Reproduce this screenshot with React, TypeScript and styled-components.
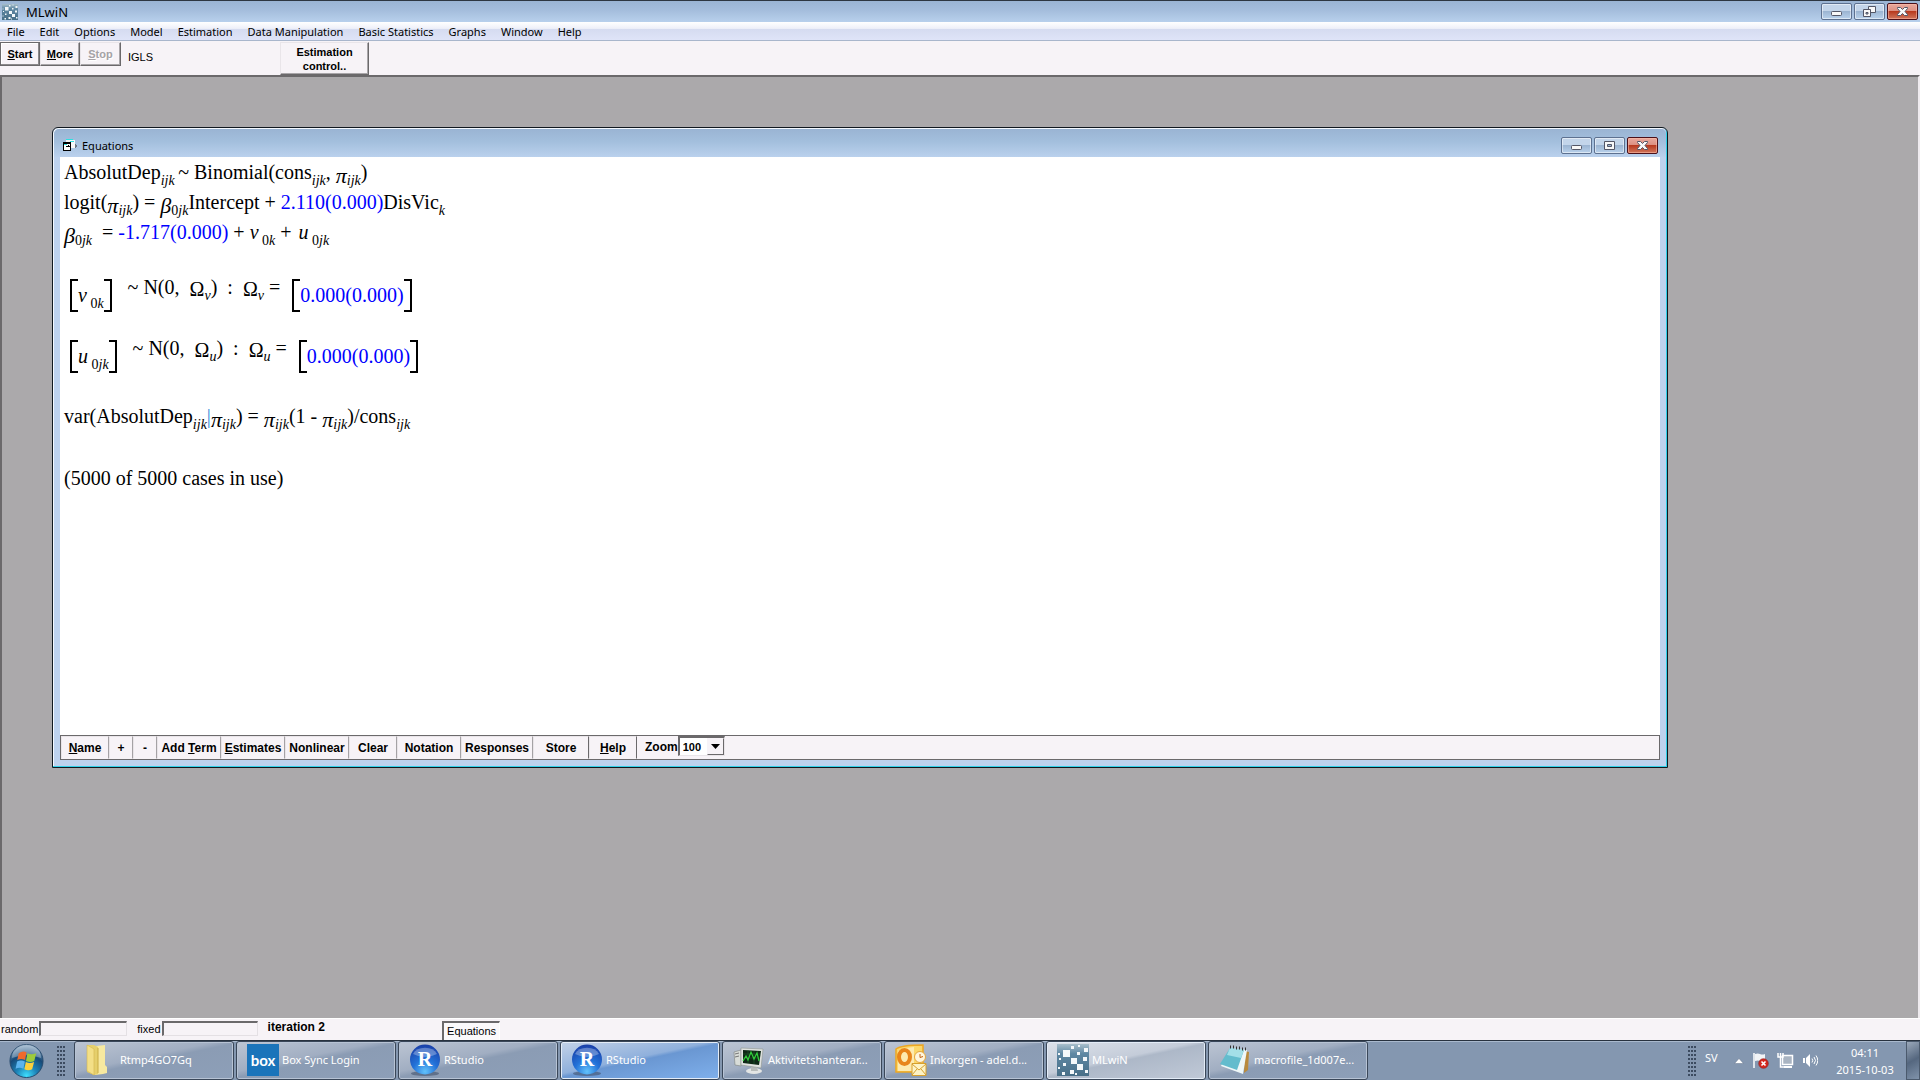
import React from "react";
import styled, { createGlobalStyle, css } from "styled-components";

const UI = `"Noto Sans", "Open Sans", sans-serif`;
const SANS = `"Liberation Sans", Arial, sans-serif`;
const SERIF = `"Liberation Serif", "Times New Roman", serif`;

const Global = createGlobalStyle`
  *, *::before, *::after { box-sizing: border-box; }
  body { margin: 0; background: #aba9ab; font-family: ${UI}; font-size: 11px; color: #000; }
  button, input, select { font: inherit; color: inherit; margin: 0; border-radius: 0; }
`;

const Screen = styled.div`
  display: flex;
  flex-direction: column;
  height: 100vh;
  overflow: hidden;
`;

/* ---------- title bars ---------- */
const AppTitle = styled.header`
  display: flex;
  flex: none;
  align-items: center;
  gap: 8px;
  height: 22px;
  padding: 0 2px;
  border-top: 1px solid #2d3640;
  background: linear-gradient(#9ab4d3, #a3bcdb 40%, #b8d0ec);
  font-size: 13px;
  line-height: 16px;
`;

const TitleText = styled.span`
  flex: 1;
`;

const Controls = styled.div`
  display: flex;
  gap: 2px;
`;

const Control = styled.button<{ $close?: boolean }>`
  display: flex;
  align-items: center;
  justify-content: center;
  width: 31px;
  height: 17px;
  padding: 0;
  border: 1px solid #5d7190;
  border-radius: 2px;
  box-shadow: inset 0 0 0 1px rgba(255, 255, 255, 0.5);
  background: linear-gradient(#c3d5ea 0 48%, #9cb5d2 50%, #b9d2ec);
  ${(p) =>
    p.$close &&
    css`
      border-color: #4b1019;
      box-shadow: inset 0 0 0 1px rgba(255, 190, 170, 0.55);
      background: linear-gradient(#e8a99e, #dc8f80 48%, #b83a1f 50%, #d0765c);
    `}
`;

/* ---------- menu and toolbar ---------- */
const MenuBar = styled.nav`
  display: flex;
  flex: none;
  gap: 1px;
  height: 19px;
  border-bottom: 1px solid #a9b6cc;
  background: linear-gradient(#ffffff, #eef0f9 36%, #d5dbf0 38%, #dfe4f8);
`;

const MenuItem = styled.button`
  padding: 1px 7px 0;
  border: 0;
  background: none;
  line-height: 17px;
`;

const Toolbar = styled.div`
  display: flex;
  flex: none;
  align-items: flex-start;
  height: 34px;
  padding-top: 1px;
  background: #f7f3f7;
  font-family: ${SANS};
`;

const ToolButton = styled.button<{ $w: number; $tall?: boolean; $default?: boolean }>`
  width: ${(p) => p.$w}px;
  height: ${(p) => (p.$tall ? 33 : 24)}px;
  padding: 0;
  border: 1px solid;
  border-color: #e9e5e9 #6b696b #6b696b #e9e5e9;
  box-shadow: inset -1px -1px #a9a6a9;
  background: #f7f3f7;
  font-weight: 700;
  line-height: 14px;
  ${(p) => p.$default && css`border-color: #6b696b; box-shadow: inset -1px -1px #8b898b, inset 1px 1px #fff;`}
  &:disabled { color: #a5a2a5; text-shadow: 1px 1px #fff; }
`;

const Method = styled.span`
  width: 159px;
  padding: 9px 0 0 7px;
  line-height: 13px;
`;

const Workspace = styled.main`
  flex: 1;
  min-height: 0;
  padding: 50px 250px 0 50px;
  border: solid #6b696b;
  border-width: 2px 0 0 2px;
  border-right: 2px solid #efebef;
  background: #aba9ab;
`;

/* ---------- equations window ---------- */
const Window = styled.section`
  display: flex;
  flex-direction: column;
  height: 641px;
  border: 1px solid #10181f;
  border-radius: 6px 6px 0 0;
  box-shadow: inset -1px -1px #2fd0e8, inset 1px 1px #f4f9ff;
  background: #bdd2ee;
  padding: 1px 7px 7px;
`;

const WindowTitle = styled.header`
  display: flex;
  flex: none;
  align-items: center;
  gap: 4px;
  height: 28px;
  margin: 0 -6px;
  padding: 4px 8px 0;
  border-radius: 5px 5px 0 0;
  background: linear-gradient(#9ab4d3, #a3bfdd 45%, #bad1ed);
`;

const Sheet = styled.div`
  flex: 1;
  min-height: 0;
  padding: 0 4px;
  background: #fff;
  font-family: ${SERIF};
  font-size: 20px;
  white-space: pre;
`;

const Line = styled.div<{ $before?: number }>`
  height: 30px;
  margin-top: ${(p) => p.$before ?? 0}px;
  line-height: 30px;
`;

const MatrixLine = styled.div<{ $before: number }>`
  display: flex;
  align-items: flex-start;
  height: 33px;
  margin-top: ${(p) => p.$before}px;
  padding-left: 6px;
  line-height: 16px;
`;

const Matrix = styled.span`
  display: flex;
  height: 33px;
  line-height: 32px;
  &::before, &::after {
    content: "";
    width: 8px;
    border: 2px solid #000;
  }
  &::before { border-right: 0; }
  &::after { border-left: 0; }
`;

const Relation = styled.span`
  margin: 0 12px 0 16px;
`;

const Sub = styled.sub`
  font-size: 14px;
  font-style: italic;
  line-height: 0;
  vertical-align: -6px;
`;

const Num = styled.span`
  font-style: normal;
`;

const Greek = styled.i`
  font-size: 22px;
  line-height: 0;
  vertical-align: -4px;
`;

const Omega = styled.span`
  line-height: 0;
  vertical-align: -2px;
`;

const Effect = styled.i`
  padding-left: 2px;
`;

const Est = styled.span`
  color: #0000ff;
`;

const Bar = styled.span`
  color: #2f86d8;
`;

const ActionBar = styled.div`
  display: flex;
  flex: none;
  height: 25px;
  border: 1px solid #6b696b;
  background: #f7f3f7;
  font-family: ${SANS};
  font-size: 12px;
  font-weight: 700;
`;

const Action = styled.button<{ $w: number; $edge?: boolean }>`
  width: ${(p) => p.$w}px;
  padding: 0;
  border: 1px solid;
  border-color: #e9e5e9 ${(p) => (p.$edge ? "#6b696b" : "#a5a2a5")} #f7f3f7 #e9e5e9;
  background: #f7f3f7;
  white-space: nowrap;
`;

const ZoomLabel = styled.label`
  padding-left: 8px;
  line-height: 22px;
`;

const ZoomBox = styled.span`
  display: grid;
  grid-template-columns: 1fr 17px;
  width: 47px;
  height: 20px;
  border: solid;
  border-width: 2px 1px 1px 2px;
  border-color: #6b696b #e9e5e9 #e9e5e9 #6b696b;
  background: #fff;
  font-size: 11px;
`;

const ZoomSelect = styled.select`
  grid-area: 1 / 1 / 2 / 3;
  padding: 0 0 0 3px;
  border: 0;
  outline: 0;
  appearance: none;
  background: none;
`;

const ZoomArrow = styled.span`
  display: flex;
  grid-area: 1 / 2 / 2 / 3;
  align-items: center;
  justify-content: center;
  border: 1px solid;
  border-color: #f7f3f7 #6b696b #6b696b #f7f3f7;
  background: #f7f3f7;
  pointer-events: none;
`;

/* ---------- status bar ---------- */
const StatusBar = styled.footer`
  display: flex;
  flex: none;
  align-items: flex-start;
  height: 22px;
  padding: 2px 1px 0;
  border-top: 1px solid #fff;
  background: #f7f3f7;
  font-family: ${SANS};
`;

const Progress = styled.label<{ $w: number }>`
  display: flex;
  gap: 1px;
  margin-right: 10px;
  line-height: 16px;
  input {
    width: ${(p) => p.$w}px;
    height: 15px;
    padding: 0;
    border: solid;
    border-width: 2px 1px 1px 2px;
    border-color: #6b696b #e4e0e4 #e4e0e4 #6b696b;
    background: #f7f3f7;
    outline: 0;
  }
`;

const Iteration = styled.strong`
  width: 174px;
  font-size: 12px;
  line-height: 13px;
`;

const Pane = styled.button`
  align-self: flex-end;
  width: 58px;
  height: 19px;
  padding: 0 0 1px 1px;
  border: solid;
  border-width: 2px 1px 0 2px;
  border-color: #6b696b #fff #fff #6b696b;
  background: #fbf9fb;
`;

/* ---------- taskbar ---------- */
const Taskbar = styled.footer`
  display: flex;
  flex: none;
  align-items: center;
  height: 40px;
  border-top: 1px solid #28323f;
  box-shadow: inset 0 1px #a9b9cd;
  background: #8497b0;
  color: #fff;
`;

const StartButton = styled.button`
  display: flex;
  width: 53px;
  padding: 0 9px;
  border: 0;
  background: none;
`;

const Grip = styled.span`
  width: 9px;
  height: 30px;
  margin: 0 8px 0 4px;
  background: radial-gradient(circle at 1px 1px, #3c4b60 1px, transparent 1px) 0 0 / 3px 4px;
`;

const Tasks = styled.div`
  display: flex;
  flex: 1;
  gap: 2px;
`;

const Task = styled.button<{ $tone?: "blue" | "light" }>`
  display: flex;
  align-items: center;
  gap: 3px;
  width: 160px;
  height: 39px;
  padding: 0 0 1px 10px;
  border: 1px solid #3a4759;
  border-radius: 3px;
  box-shadow: inset 0 0 0 1px ${(p) => (p.$tone ? "#e3ecf7" : "#b7c3d4")};
  background: ${(p) =>
    p.$tone === "blue"
      ? "linear-gradient(168deg, #c3d2e8 0, #8fb0dc 45%, #6a97d2 50%, #7fb0ec)"
      : p.$tone === "light"
      ? "linear-gradient(168deg, #dde2ea 0, #c4ccd9 45%, #adb8c8 50%, #c0c9d7)"
      : "linear-gradient(168deg, #bcc5d3 0, #a1aec2 42%, #8b9cb4 50%, #8d9fb8)"};
  white-space: nowrap;
`;

const TaskLabel = styled.span`
  padding-bottom: 2px;
`;

const Tray = styled.div`
  display: flex;
  align-items: center;
  height: 39px;
`;

const Lang = styled.span`
  width: 29px;
  padding-bottom: 6px;
`;

const TrayIcons = styled.div`
  display: flex;
  align-items: center;
  gap: 8px;
`;

const Clock = styled.time`
  width: 88px;
  padding-left: 6px;
  line-height: 17px;
  text-align: center;
`;

const ShowDesktop = styled.button`
  width: 14px;
  height: 39px;
  padding: 0;
  border: 1px solid #4b5a6d;
  background: linear-gradient(150deg, #9aa8ba, #55677f 50%, #8093ab);
`;

/* ---------- drawings ---------- */
const squares = [
  [1, 9, 2], [6, 6, 7], [14, 2, 3], [21, 1, 2], [20, 8, 3], [27, 4, 4], [14, 14, 6], [26, 13, 4],
  [2, 14, 2], [6, 19, 3], [20, 20, 6], [13, 26, 4], [5, 28, 3], [28, 26, 3], [1, 23, 2], [18, 29, 2],
];

const Mosaic = ({ size }: { size: number }) => (
  <svg width={size} height={size} viewBox="0 0 32 32" aria-hidden="true">
    <defs>
      <linearGradient id="mosaic" x1="0" y1="0" x2="0" y2="1">
        <stop offset="0" stopColor="#a9bfcc" />
        <stop offset=".3" stopColor="#5f88a3" />
        <stop offset="1" stopColor="#486f88" />
      </linearGradient>
    </defs>
    <rect width="32" height="32" fill="url(#mosaic)" />
    {squares.map(([x, y, s]) => (
      <rect key={`${x}-${y}`} x={x} y={y} width={s} height={s} fill="#f4f8fa" />
    ))}
  </svg>
);

const MinGlyph = () => (
  <svg width="13" height="11" viewBox="0 0 13 11" aria-hidden="true">
    <rect x="1.5" y="5.5" width="10" height="4" rx="1" fill="#f8f8f8" stroke="#535666" />
  </svg>
);
const MaxGlyph = () => (
  <svg width="13" height="11" viewBox="0 0 13 11" aria-hidden="true">
    <path d="M1.5 1.5h10v8h-10zM4.500 4.500h4v2h-4z" fill="#f8f8f8" fillRule="evenodd" stroke="#535666" />
  </svg>
);
const RestoreGlyph = () => (
  <svg width="13" height="12" viewBox="0 0 13 12" aria-hidden="true">
    <path d="M5.500.5h7v6h-7z" fill="#f8f8f8" stroke="#535666" />
    <path d="M.5 3.500h7v7h-7zM3 6.500h2v1.500h-2z" fill="#f8f8f8" fillRule="evenodd" stroke="#535666" />
  </svg>
);
const CloseGlyph = () => (
  <svg width="13" height="11" viewBox="0 0 13 11" aria-hidden="true">
    <path d="M1.500 1.500h3l2 2 2-2h3v1l-2.500 3 2.500 3v1h-3l-2-2-2 2h-3v-1l2.500-3-2.500-3z" fill="#f8f8f8" stroke="#535666" />
  </svg>
);

const FormIcon = () => (
  <svg width="16" height="16" viewBox="0 0 16 16" shapeRendering="crispEdges" aria-hidden="true">
    <path d="M4 3h9v8H4z" fill="#f7f7f7" />
    <path d="M4 2.500h7M8 4.500h4" stroke="#2fe0e0" />
    <path d="M13 7h1v1h1v2h-1v1h-1z" fill="#6c7684" />
    <path d="M1.500 5.500h7v8h-7z" fill="#fff" stroke="#000" />
    <path d="M1 6.500h8" stroke="#000" />
    <path d="M2 7.500h3" stroke="#2fe0e0" />
    <path d="M4 9.500h2v-2M6 9.500h2" stroke="#000" fill="none" />
  </svg>
);

const Orb = () => (
  <svg width="36" height="36" viewBox="0 0 36 36" aria-hidden="true">
    <defs>
      <radialGradient id="orb" cx=".5" cy=".95" r=".9">
        <stop offset="0" stopColor="#3fe0ff" />
        <stop offset=".35" stopColor="#1d84b8" />
        <stop offset=".7" stopColor="#174a78" />
        <stop offset="1" stopColor="#7f9fbc" />
      </radialGradient>
    </defs>
    <circle cx="18" cy="18" r="17" fill="url(#orb)" stroke="#24486b" />
    <path d="M3 15a15 14 0 0 1 30 0q-15-6-30 0z" fill="#fff" opacity=".3" />
    <path d="M10 10q4-3 8-1l-1.500 8q-4-2-8 0z" fill="#ee6a2c" />
    <path d="M19 10q4 2 9 0l-2 8q-4 2-8.500 0z" fill="#9ccb3b" />
    <path d="M8.300 18.500q4-2 8 0l-1.500 7.500q-4-2-8 0z" fill="#5bb3ee" />
    <path d="M17.300 19q4 2 8.500 0l-2 7.500q-4 2-8 0z" fill="#fcd03c" />
  </svg>
);

const FolderIcon = () => (
  <svg width="32" height="32" viewBox="0 0 32 32" aria-hidden="true">
    <path d="M11 2l9-1v20l2 2v6l-4 1-8 1z" fill="#f7e9a0" />
    <path d="M2 1l7 0 4 2v27l-4 1-7-3z" fill="#e5cf6c" />
    <path d="M2 1l7 4v26l-7-4z" fill="#f3df87" stroke="#d3b74f" strokeWidth=".6" />
    <path d="M13 4v25" stroke="#c9ac45" />
  </svg>
);

const BoxText = styled.text`
  font: 700 15px Lato, sans-serif;
`;

const BoxIcon = () => (
  <svg width="32" height="32" viewBox="0 0 32 32" aria-hidden="true">
    <rect width="32" height="32" fill="#1a74ba" />
    <BoxText x="16" y="22" textAnchor="middle" fill="#fff">box</BoxText>
  </svg>
);

const RText = styled.text`
  font: 700 20px ${SERIF};
`;

const RIcon = () => (
  <svg width="32" height="32" viewBox="0 0 32 32" aria-hidden="true">
    <defs>
      <radialGradient id="rball" cx=".5" cy=".9" r=".9">
        <stop offset="0" stopColor="#62c2fb" />
        <stop offset=".45" stopColor="#2372d8" />
        <stop offset="1" stopColor="#1a3fa8" />
      </radialGradient>
    </defs>
    <ellipse cx="16" cy="29.500" rx="14" ry="2.500" fill="#43546e" opacity=".6" />
    <circle cx="16" cy="15.500" r="15" fill="url(#rball)" />
    <path d="M4 10a13 10 0 0 1 24 0q-12 6-24 0z" fill="#fff" opacity=".3" />
    <RText x="16" y="22" textAnchor="middle" fill="#fff">R</RText>
  </svg>
);

const MonitorIcon = () => (
  <svg width="32" height="32" viewBox="0 0 32 32" aria-hidden="true">
    <path d="M1 8l7-2v16l-6-1z" fill="#d8dcd8" stroke="#7c827e" strokeWidth=".6" />
    <path d="M2 10l4-1M2 13l4-1" stroke="#777" />
    <ellipse cx="21" cy="27" rx="8" ry="3" fill="#e3e5e4" />
    <path d="M18 22l6 1 1 4h-7z" fill="#b7bbb9" />
    <path d="M8 4l22 1-2 19-20-3z" fill="#dfe2df" stroke="#8e9590" strokeWidth=".6" />
    <path d="M10 6l18 1-2 14-16-2z" fill="#0e2815" />
    <path d="M10 10h17M10 14h17M15 6v13M21 7v13" stroke="#22602c" strokeWidth=".6" />
    <path d="M10 17l3-5 2 4 3-8 3 7 3-6 2 8" fill="none" stroke="#31d13b" strokeWidth="1.200" />
  </svg>
);

const OutlookIcon = () => (
  <svg width="32" height="32" viewBox="0 0 32 32" aria-hidden="true">
    <path d="M1 5q5-4 27-4v27H1z" fill="#fbd76a" stroke="#eda722" strokeWidth="1.500" />
    <path d="M3 7q4-3 16-4v24H3z" fill="#fdeab0" />
    <ellipse cx="9.500" cy="13" rx="5.500" ry="7" fill="none" stroke="#e8851b" strokeWidth="4" />
    <circle cx="25" cy="13" r="5.500" fill="#fff6dc" stroke="#e3a63d" />
    <path d="M25 10v3.500l3-1" fill="none" stroke="#c35f12" />
    <path d="M17 19.500h14v12H17z" fill="#fdf3c6" stroke="#d6a02e" />
    <path d="M17 20l7 6 7-6M17 31l5-6M31 31l-5-6" fill="none" stroke="#d6a02e" />
  </svg>
);

const NotepadIcon = () => (
  <svg width="32" height="32" viewBox="0 0 32 32" aria-hidden="true">
    <path d="M26 7l4 1-1 18-4 3z" fill="#b98a3c" />
    <path d="M11 4l17 2-4 24-22-8z" fill="#eef7f8" />
    <path d="M11 4l14 2-7 20-17-6z" fill="#63bccd" />
    <path d="M11 4l14 2-3 8-14-3z" fill="#a3dfe8" />
    <path d="M11 3h1M14 3h1M17 4h1M20 4h1M23 5h1M26 5h1" stroke="#333" strokeWidth="3" />
  </svg>
);

const UpIcon = () => (
  <svg width="10" height="6" viewBox="0 0 10 6" aria-hidden="true">
    <path d="M5 .5L9.500 5.500H.5z" fill="#fff" stroke="#65758c" strokeWidth=".5" />
  </svg>
);
const FlagIcon = () => (
  <svg width="17" height="17" viewBox="0 0 17 17" aria-hidden="true">
    <path d="M2 1v15" stroke="#fff" strokeWidth="1.500" />
    <path d="M3 2q3-1 5 0t5 0v7q-3 1-5 0t-5 0z" fill="#f2f4f6" />
    <circle cx="11.500" cy="11.500" r="4.800" fill="#d4281e" stroke="#8b1c1c" strokeWidth=".6" />
    <path d="M9.500 9.500l4 4M13.500 9.500l-4 4" stroke="#fff" strokeWidth="1.600" />
  </svg>
);
const NetworkIcon = () => (
  <svg width="17" height="17" viewBox="0 0 17 17" aria-hidden="true">
    <rect x="5.500" y="3.500" width="10" height="9" fill="#a9b4c2" stroke="#fff" strokeWidth="1.500" />
    <path d="M7 15h8" stroke="#fff" strokeWidth="2" />
    <path d="M1 1v4h5V1M3.500 1v4M3.500 5v10h4" fill="none" stroke="#fff" strokeWidth="1.500" />
  </svg>
);
const SpeakerIcon = () => (
  <svg width="16" height="15" viewBox="0 0 16 15" aria-hidden="true">
    <path d="M1 5h2v5H1z" fill="#fff" />
    <path d="M4 5l4-4v13l-4-4z" fill="#fff" />
    <path d="M10 5.500q1.500 2 0 4M12 4q3 3.500 0 7M14 2.500q3.500 5 0 10" fill="none" stroke="#fff" />
  </svg>
);

/* ---------- formula parts ---------- */
const IJK = () => <Sub>ijk</Sub>;
const Pi = () => (
  <>
    <Greek>π</Greek>
    <IJK />
  </>
);
const Beta = () => (
  <>
    <Greek>β</Greek>
    <Sub><Num>0</Num>jk</Sub>
  </>
);

const Distribution = ({ level, index, value }: { level: string; index: string; value: string }) => (
  <>
    <Matrix>
      <span>
        <i>{level}</i><Sub>{" "}<Num>0</Num>{index}</Sub>
      </span>
    </Matrix>
    <Relation>
      ~ N(0,{"  "}<Omega>Ω</Omega><Sub>{level}</Sub>){"  "}:{"  "}<Omega>Ω</Omega><Sub>{level}</Sub> =
    </Relation>
    <Matrix>
      <Est>{value}</Est>
    </Matrix>
  </>
);

const menus = ["File", "Edit", "Options", "Model", "Estimation", "Data Manipulation", "Basic Statistics", "Graphs", "Window", "Help"];

const actions: { w: number; label: React.ReactNode; edge?: boolean }[] = [
  { w: 48, label: <><u>N</u>ame</> },
  { w: 24, label: "+" },
  { w: 24, label: "-" },
  { w: 64, label: <>Add <u>T</u>erm</> },
  { w: 64, label: <><u>E</u>stimates</> },
  { w: 64, label: "Nonlinear" },
  { w: 48, label: "Clear" },
  { w: 64, label: "Notation" },
  { w: 72, label: "Responses" },
  { w: 56, label: "Store", edge: true },
  { w: 48, label: <><u>H</u>elp</>, edge: true },
];

const tasks: { icon: React.ReactNode; label: string; tone?: "blue" | "light" }[] = [
  { icon: <FolderIcon />, label: "Rtmp4GO7Gq" },
  { icon: <BoxIcon />, label: "Box Sync Login" },
  { icon: <RIcon />, label: "RStudio" },
  { icon: <RIcon />, label: "RStudio", tone: "blue" },
  { icon: <MonitorIcon />, label: "Aktivitetshanterar..." },
  { icon: <OutlookIcon />, label: "Inkorgen - adel.d..." },
  { icon: <Mosaic size={32} />, label: "MLwiN", tone: "light" },
  { icon: <NotepadIcon />, label: "macrofile_1d007e..." },
];

export default function App() {
  return (
    <Screen>
      <Global />
      <AppTitle>
        <Mosaic size={16} />
        <TitleText>MLwiN</TitleText>
        <Controls>
          <Control aria-label="Minimize"><MinGlyph /></Control>
          <Control aria-label="Restore"><RestoreGlyph /></Control>
          <Control $close aria-label="Close"><CloseGlyph /></Control>
        </Controls>
      </AppTitle>
      <MenuBar>
        {menus.map((m) => <MenuItem key={m}>{m}</MenuItem>)}
      </MenuBar>
      <Toolbar>
        <ToolButton $w={40} $default><u>S</u>tart</ToolButton>
        <ToolButton $w={40}><u>M</u>ore</ToolButton>
        <ToolButton $w={41} disabled><u>S</u>top</ToolButton>
        <Method>IGLS</Method>
        <ToolButton $w={89} $tall>Estimation<br />control..</ToolButton>
      </Toolbar>
      <Workspace>
        <Window>
          <WindowTitle>
            <FormIcon />
            <TitleText>Equations</TitleText>
            <Controls>
              <Control aria-label="Minimize equations"><MinGlyph /></Control>
              <Control aria-label="Maximize equations"><MaxGlyph /></Control>
              <Control $close aria-label="Close equations"><CloseGlyph /></Control>
            </Controls>
          </WindowTitle>
          <Sheet>
            <Line>AbsolutDep<Sub>ijk </Sub>~ Binomial(cons<IJK />, <Pi />)</Line>
            <Line>logit(<Pi />) = <Beta />Intercept + <Est>2.110(0.000)</Est>DisVic<Sub>k</Sub></Line>
            <Line><Beta />{"  "}= <Est>-1.717(0.000)</Est> + <i>v</i><Sub> <Num>0</Num>k</Sub> + <Effect>u</Effect><Sub> <Num>0</Num>jk</Sub></Line>
            <MatrixLine $before={32}><Distribution level="v" index="k" value="0.000(0.000)" /></MatrixLine>
            <MatrixLine $before={28}><Distribution level="u" index="jk" value="0.000(0.000)" /></MatrixLine>
            <Line $before={28}>var(AbsolutDep<IJK /><Bar>|</Bar><Pi />) = <Pi />(1 - <Pi />)/cons<IJK /></Line>
            <Line $before={32}>(5000 of 5000 cases in use)</Line>
          </Sheet>
          <ActionBar>
            {actions.map((a, i) => <Action key={i} $w={a.w} $edge={a.edge}>{a.label}</Action>)}
            <ZoomLabel htmlFor="zoom">Zoom</ZoomLabel>
            <ZoomBox>
              <ZoomSelect id="zoom" defaultValue="100"><option>100</option></ZoomSelect>
              <ZoomArrow>
                <svg width="9" height="5" viewBox="0 0 9 5" aria-hidden="true"><path d="M0 0h9L4.500 5z" /></svg>
              </ZoomArrow>
            </ZoomBox>
          </ActionBar>
        </Window>
      </Workspace>
      <StatusBar>
        <Progress $w={88}>random<input readOnly /></Progress>
        <Progress $w={96}>fixed<input readOnly /></Progress>
        <Iteration>iteration 2</Iteration>
        <Pane>Equations</Pane>
      </StatusBar>
      <Taskbar>
        <StartButton aria-label="Start menu"><Orb /></StartButton>
        <Grip />
        <Tasks>
          {tasks.map((t, i) => <Task key={i} $tone={t.tone}>{t.icon}<TaskLabel>{t.label}</TaskLabel></Task>)}
        </Tasks>
        <Tray>
          <Grip />
          <Lang>SV</Lang>
          <TrayIcons>
            <UpIcon />
            <FlagIcon />
            <NetworkIcon />
            <SpeakerIcon />
          </TrayIcons>
          <Clock>04:11<br />2015-10-03</Clock>
          <ShowDesktop aria-label="Show desktop" />
        </Tray>
      </Taskbar>
    </Screen>
  );
}
